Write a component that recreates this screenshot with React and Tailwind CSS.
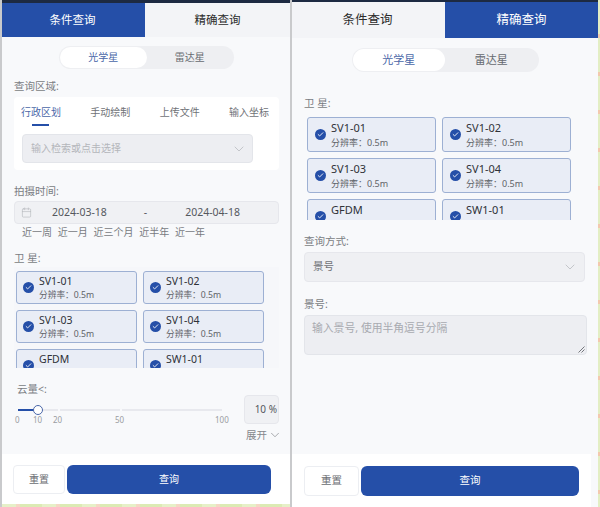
import { ChevronDown, Calendar, Check } from 'lucide-react';

const FONT = "font-['Noto_Sans','Noto_Sans_CJK_SC',sans-serif]";

const SATELLITES = [
  { name: 'SV1-01', res: '分辨率：0.5m' },
  { name: 'SV1-02', res: '分辨率：0.5m' },
  { name: 'SV1-03', res: '分辨率：0.5m' },
  { name: 'SV1-04', res: '分辨率：0.5m' },
  { name: 'GFDM', res: '分辨率：0.5m' },
  { name: 'SW1-01', res: '分辨率：0.5m' },
];

// Header tabs, the active one is solid blue
const QueryTabs = ({ active, className, firstClass }) => (
  <div className={`flex shrink-0 bg-[#f3f4f7] ${className}`}>
    {['条件查询', '精确查询'].map((label, i) => (
      <div
        key={label}
        className={`flex items-center justify-center ${i === 0 ? firstClass : 'flex-1'} ${
          i === active ? 'bg-[#254fa8] text-white' : 'text-[#2b2b2b]'
        }`}
      >
        {label}
      </div>
    ))}
  </div>
);

// Pill switch between optical and radar satellites
const KindToggle = ({ className, itemClass }) => (
  <div className={`flex rounded-full bg-[#eeeff2] p-[1px] ${className}`}>
    <div className={`flex items-center justify-center rounded-full bg-white text-[#4a67a8] ${itemClass}`}>光学星</div>
    <div className={`flex items-center justify-center text-[#666a70] ${itemClass}`}>雷达星</div>
  </div>
);

const SatelliteCard = ({ name, res, size, nameClass, resClass }) => (
  <div className={`flex shrink-0 items-center rounded-[3px] border border-[#9db0d3] bg-[#e9edf6] ${size}`}>
    <div className="mr-[5px] flex size-[11px] shrink-0 items-center justify-center rounded-full bg-[#254fa8] text-white">
      <Check size={7} strokeWidth={3} />
    </div>
    <div className="min-w-0">
      <div className={`text-[#2f3238] ${nameClass}`}>{name}</div>
      <div className={`text-[#5f6368] ${resClass}`}>{res}</div>
    </div>
  </div>
);

const Label = ({ children, className = '' }) => (
  <div className={`text-[10.5px] leading-[14px] text-[#7a7d83] ${className}`}>{children}</div>
);

const FooterButtons = ({ className, resetClass, queryClass }) => (
  <div className={`flex items-center ${className}`}>
    <div className={`flex items-center justify-center rounded-[4px] border border-[#eceef2] bg-white text-[#6a6d72] ${resetClass}`}>重置</div>
    <div className={`flex items-center justify-center rounded-[6px] bg-[#254fa8] text-white ${queryClass}`}>查询</div>
  </div>
);

const ConditionPanel = () => (
  <div className="flex h-full w-[288px] shrink-0 flex-col bg-[#f8f9fb]">
    <div className="h-[3px] shrink-0 bg-[#1d2a42]" />
    <QueryTabs active={0} firstClass="w-[143px] pr-[2px]" className="h-[34px] text-[11.5px]" />

    <div className="flex min-h-0 flex-1 flex-col pl-[12px] pr-[9px]">
      <KindToggle className="-ml-[2px] mt-[9px] h-[23px] w-[175px] self-center text-[10px]" itemClass="w-[87px]" />

      <Label className="mt-[10px]">查询区域:</Label>
      <div className="mt-[4px] h-[73px] w-[265px] rounded-[4px] bg-white pl-[7px] pr-[10px] pt-[8px]">
        <div className="flex justify-between text-[10px] leading-[14px] text-[#6f7277]">
          <span className="text-[#4a67a8]">行政区划</span>
          <span>手动绘制</span>
          <span>上传文件</span>
          <span>输入坐标</span>
        </div>
        <div className="ml-[11px] mt-[5px] h-[2px] w-[17px] bg-[#254fa8]" />
        <div className="ml-[1px] mt-[8px] flex h-[29px] w-[231px] items-center justify-between rounded-[4px] border border-[#e3e5ea] bg-[#edeef2] pl-[8px] pr-[5px] text-[10px] text-[#b4b6bb]">
          输入检索或点击选择
          <ChevronDown size={16} strokeWidth={1} className="text-[#aeb0b5]" />
        </div>
      </div>

      <Label className="mt-[14px]">拍摄时间:</Label>
      <div className="mt-[3px] flex h-[23px] w-[265px] items-center rounded-[4px] border border-[#e6e7ec] bg-[#f0f1f4] pl-[6px] text-[10.5px] text-[#55585e]">
        <Calendar size={11} strokeWidth={1.25} className="text-[#b0b3b8]" />
        <span className="ml-[20px]">2024-03-18</span>
        <span className="ml-[37px]">-</span>
        <span className="ml-[38px]">2024-04-18</span>
      </div>
      <div className="ml-[8px] mt-[1px] flex gap-[5.75px] text-[10px] leading-[14px] text-[#77797e]">
        <span>近一周</span>
        <span>近一月</span>
        <span>近三个月</span>
        <span>近半年</span>
        <span>近一年</span>
      </div>

      <Label className="mt-[12px]">卫 星:</Label>
      <div className="mt-[2px] h-[101px] w-[265px] overflow-hidden bg-[#f6f7fa] pl-[2px] pt-[4px]">
        <div className="grid grid-cols-[121px_121px] gap-x-[6px] gap-y-[6px]">
          {SATELLITES.map((s) => (
            <SatelliteCard
              key={s.name}
              {...s}
              size="h-[33px] w-[121px] pl-[6px]"
              nameClass="text-[10.5px] leading-[15px]"
              resClass="text-[8.7px] leading-[12px]"
            />
          ))}
        </div>
      </div>

      <div className="mt-[14px] flex">
        <div className="w-[230px]">
          <Label className="ml-[3px]">云量&lt;:</Label>
          <div className="relative ml-[4px] mt-[8px] h-[22px] w-[206px]">
            <div className="flex h-[12px] items-center gap-[2px]">
              <div className="h-[1.5px] w-[20px] bg-[#254fa8]" />
              <div className="h-[1.5px] w-[18px] bg-[#e8e9ee]" />
              <div className="h-[1.5px] w-[60px] bg-[#e8e9ee]" />
              <div className="h-[1.5px] w-[100px] bg-[#e8e9ee]" />
            </div>
            <div className="absolute left-[15px] top-[1px] size-[10px] rounded-full border border-[#4a67a8] bg-white" />
            <span className="absolute left-[-3px] top-[10px] text-[8px] text-[#9a9ca1]">0</span>
            <span className="absolute left-[15px] top-[10px] text-[8px] text-[#9a9ca1]">10</span>
            <span className="absolute left-[35px] top-[10px] text-[8px] text-[#9a9ca1]">20</span>
            <span className="absolute left-[97px] top-[10px] text-[8px] text-[#9a9ca1]">50</span>
            <span className="absolute left-[197px] top-[10px] text-[8px] text-[#9a9ca1]">100</span>
          </div>
        </div>
        <div className="mt-[13px] flex h-[29px] w-[35px] items-center justify-end rounded-[4px] border border-[#e6e7ec] bg-[#f0f1f4] pr-[1px] text-[10px] text-[#55585e]">
          10 %
        </div>
      </div>
      <div className="mt-[2px] flex w-[265px] items-center justify-end gap-[1px] text-[10.5px] leading-[14px] text-[#85878c]">
        展开
        <ChevronDown size={14} strokeWidth={1} className="-mr-[3px] text-[#6f7277]" />
      </div>
    </div>

    <div className="h-[50px] shrink-0 bg-white px-[11px] pt-[11px]">
      <FooterButtons className="text-[10px]" resetClass="h-[29px] w-[52px]" queryClass="ml-[2px] h-[29px] w-[204px]" />
    </div>
    <div className="h-[3px] shrink-0 bg-[repeating-linear-gradient(90deg,#e6f0c8_0px,#e6f0c8_14px,#f3d8c4_14px,#f3d8c4_18px,#dcebb4_18px,#dcebb4_40px)]" />
  </div>
);

const ExactPanel = () => (
  <div className="flex h-full w-[306px] shrink-0 flex-col bg-[#f8f9fb]">
    <div className="h-[2px] shrink-0 bg-[#1d2a42]" />
    <QueryTabs active={1} firstClass="w-[153px] pr-[2px]" className="h-[36px] text-[12.5px]" />

    <div className="flex min-h-0 flex-1 flex-col px-[12px]">
      <KindToggle className="mt-[10px] h-[24px] w-[187px] self-center text-[11px]" itemClass="w-[93px]" />

      <Label className="mt-[24px]">卫 星:</Label>
      <div className="mt-[7px] h-[103px] overflow-hidden pl-[3px]">
        <div className="grid grid-cols-[129px_129px] gap-x-[6px] gap-y-[6px]">
          {SATELLITES.map((s) => (
            <SatelliteCard
              key={s.name}
              {...s}
              size="h-[35px] w-[129px] pl-[7px]"
              nameClass="text-[11px] leading-[16px]"
              resClass="text-[9px] leading-[13px]"
            />
          ))}
        </div>
      </div>

      <Label className="mt-[14px]">查询方式:</Label>
      <div className="mt-[4px] flex h-[30px] w-[281px] items-center justify-between rounded-[4px] border border-[#e6e7ec] bg-[#eff0f3] pl-[8px] pr-[6px] text-[10.5px] text-[#6f7277]">
        景号
        <ChevronDown size={16} strokeWidth={1} className="text-[#aeb0b5]" />
      </div>

      <Label className="mt-[15px]">景号:</Label>
      <div className="relative mt-[4px] h-[40px] w-[283px] rounded-[4px] border border-[#e3e5ea] bg-[#edeef2] pl-[7px] pt-[5px] text-[10.8px] leading-[14px] text-[#a8aab0]">
        输入景号, 使用半角逗号分隔
        <svg className="absolute bottom-[1px] right-[1px] text-[#55585e]" width="7" height="7" viewBox="0 0 7 7" fill="none" stroke="currentColor" strokeWidth="0.8">
          <path d="M0.5 6.5 6.5 0.5M3.5 6.5 6.5 3.5" />
        </svg>
      </div>
    </div>

    <div className="h-[53px] w-[299px] shrink-0 bg-white pl-[12px] pt-[12px]">
      <FooterButtons className="text-[10.5px]" resetClass="h-[30px] w-[55px]" queryClass="ml-[2px] h-[30px] w-[218px]" />
    </div>
  </div>
);

export default function App() {
  return (
    <div className={`flex h-[507px] w-[600px] overflow-hidden bg-[#c9cacc] ${FONT}`}>
      <div className="w-[2px] shrink-0" />
      <ConditionPanel />
      <div className="w-[2px] shrink-0" />
      <ExactPanel />
      <div className="w-[2px] shrink-0 bg-[repeating-linear-gradient(180deg,#e3eec4_0px,#e3eec4_34px,#f3c9ae_34px,#f3c9ae_38px)]" />
    </div>
  );
}
